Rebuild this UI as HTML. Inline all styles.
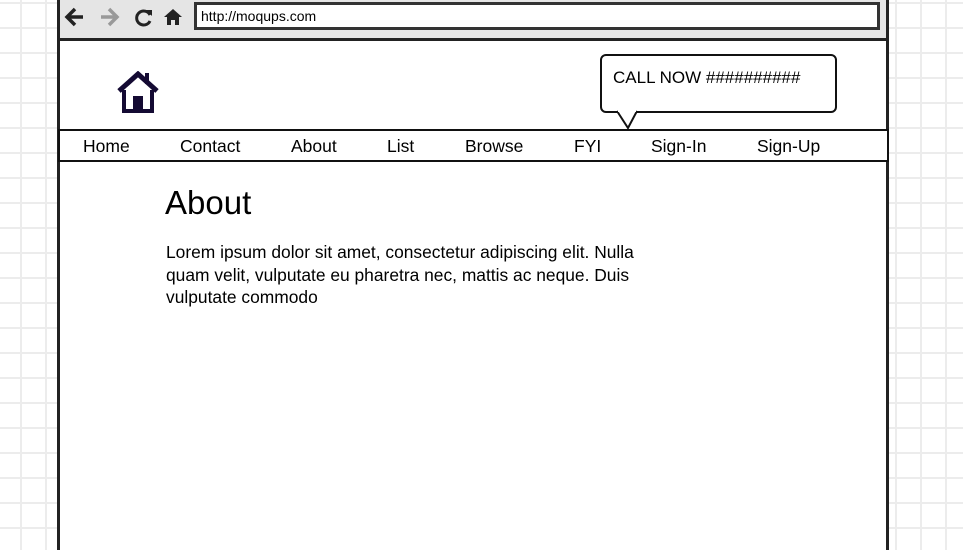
<!DOCTYPE html>
<html><head><style>
html,body{margin:0;width:963px;height:550px;overflow:hidden}
body{position:relative;background:#fff;
background-image:linear-gradient(to right,#ececec 2px,transparent 2px),linear-gradient(to bottom,#ececec 2px,transparent 2px);
background-size:25px 25px;background-position:20px 2px;font-family:"Liberation Sans",sans-serif;color:#000}
.a{position:absolute}
.win{left:57px;top:0;width:832px;height:550px;background:#fff;border-left:3px solid #222;border-right:3px solid #222;box-sizing:border-box}
.tb{left:60px;top:0;width:826px;height:38px;background:#e5e5e5;border-bottom:3px solid #222}
.url{left:194px;top:2px;width:676px;height:22px;background:#fff;border:3px solid #333;font-size:14px;line-height:22px;padding-left:4px}
.nav{left:58px;top:129px;width:827px;height:29px;border:2px solid #111;background:#fff}
.bub{left:600px;top:54px;width:237px;height:59px;border:2px solid #111;border-radius:6px;background:#fff;font-size:17px;padding:12px 0 0 11px;box-sizing:border-box}
.n{position:absolute;top:136px;font-size:17.5px}
</style></head><body>
<div class="a win"></div>
<div class="a tb"></div>
<svg class="a" style="left:64px;top:6px" width="125" height="22" viewBox="0 0 125 22">
<path d="M3 11h16M11 3l-8 8 8 8" stroke="#222" stroke-width="3.5" fill="none"/>
<path d="M37 11h17M45 3l8 8-8 8" stroke="#999" stroke-width="3.5" fill="none"/>
<path d="M86 9a7 7 0 1 0 0 6" stroke="#222" stroke-width="3" fill="none"/><path d="M82 4l6 0 0 6z" fill="#222"/>
<path d="M100 11l9-8 9 8h-3v8h-4v-5h-4v5h-4v-8z" fill="#222"/>
</svg>
<div class="a url">http://moqups.com</div>
<svg class="a" style="left:117px;top:71px" width="42" height="42" viewBox="0 0 42 42">
<path d="M2 20L21 3 40 20" stroke="#140a33" stroke-width="5" fill="none"/>
<rect x="28" y="2" width="4" height="11" fill="#140a33"/>
<path d="M7 19v21h28V19" stroke="#140a33" stroke-width="4" fill="none"/>
<rect x="16" y="25" width="10" height="15" fill="#140a33"/>
</svg>
<div class="a nav"></div>
<span class="n" style="left:83px">Home</span>
<span class="n" style="left:180px">Contact</span>
<span class="n" style="left:291px">About</span>
<span class="n" style="left:387px">List</span>
<span class="n" style="left:465px">Browse</span>
<span class="n" style="left:574px">FYI</span>
<span class="n" style="left:651px">Sign-In</span>
<span class="n" style="left:757px">Sign-Up</span>
<div class="a bub">CALL NOW ##########</div>
<svg class="a" style="left:615px;top:110px" width="24" height="20"><path d="M2 1l11 17 9-17" fill="#fff" stroke="#111" stroke-width="2"/><rect x="3" y="0" width="18" height="2" fill="#fff"/></svg>
<div class="a" style="left:165px;top:184px;font-size:33px">About</div>
<div class="a" style="left:166px;top:241px;width:490px;font-size:17.4px;line-height:22.5px">Lorem ipsum dolor sit amet, consectetur adipiscing elit. Nulla quam velit, vulputate eu pharetra nec, mattis ac neque. Duis vulputate commodo</div>
</body></html>
